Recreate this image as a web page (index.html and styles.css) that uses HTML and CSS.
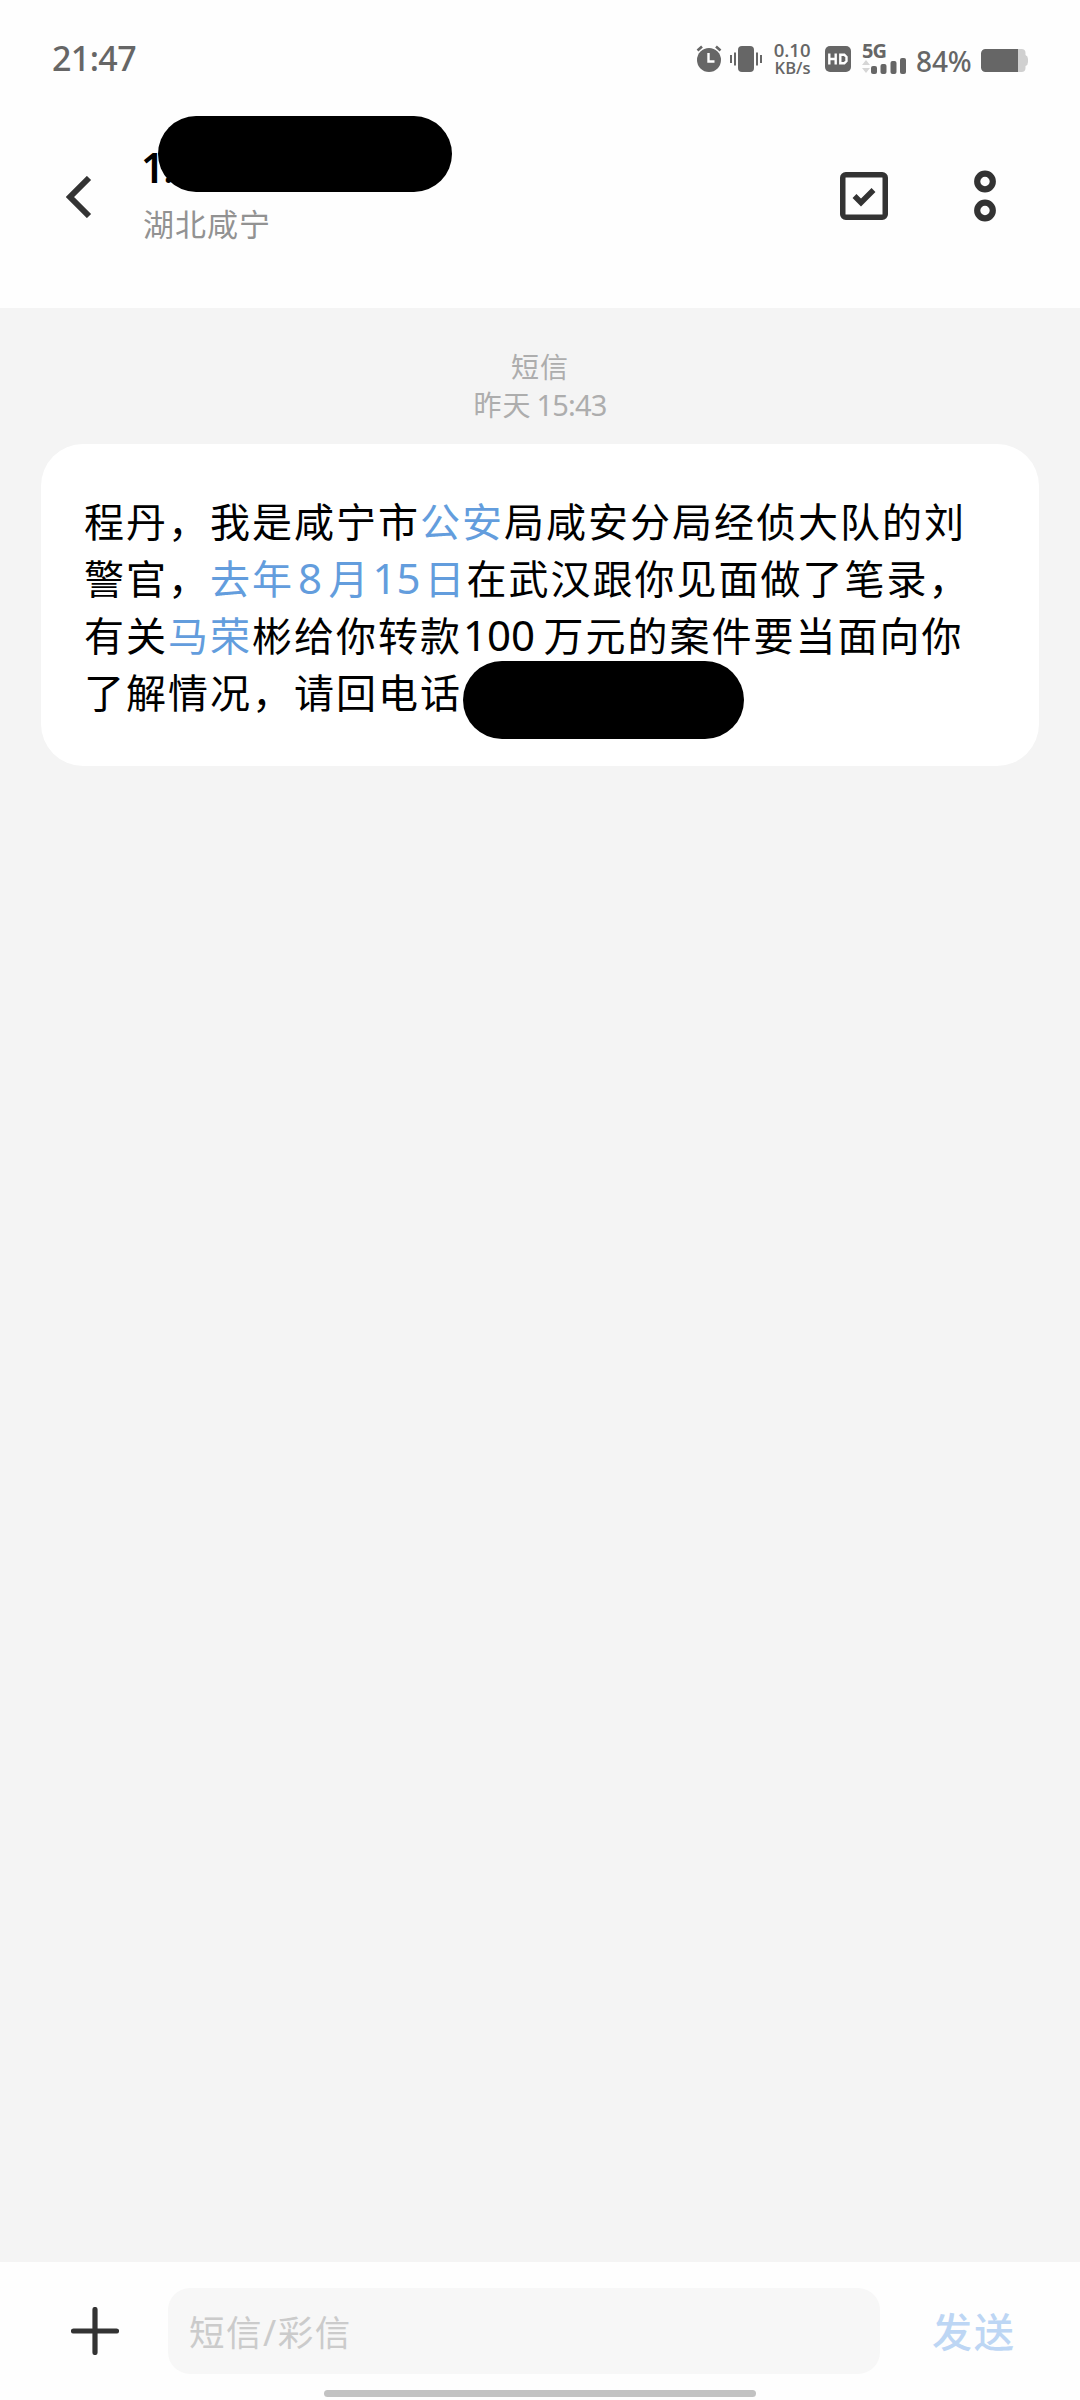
FILE: index.html
```html
<!DOCTYPE html>
<html lang="zh-CN">
<head>
<meta charset="utf-8">
<title>短信</title>
<link rel="stylesheet" href="styles.css">
</head>
<body>
<div class="screen">
  <div class="status">
    <span class="clock">21:47</span>
    <div class="tray">
      <svg class="alarm" width="26" height="28" viewBox="0 0 26 28"><circle cx="13" cy="16" r="12" fill="#666"/><path d="M1.5 6.5L6 2.5M20 2.5l4.5 4" stroke="#666" stroke-width="2.6"/><path d="M12.5 9v8.5h6" fill="none" stroke="#fff" stroke-width="2.4"/></svg>
      <svg class="vibrate" width="32" height="26" viewBox="0 0 32 26"><rect x="8" width="16" height="26" rx="4" fill="#666"/><path d="M1 9v8M5 6.500v13M27 6.500v13M31 9v8" stroke="#666" stroke-width="2"/></svg>
      <div class="speed"><span>0.10</span><span class="unit">KB/s</span></div>
      <svg class="hd" width="26" height="26" viewBox="0 0 26 26"><rect width="26" height="26" rx="5" fill="#666"/><path d="M4.300 7.500v11M10.700 7.500v11M4 13h7M15.300 8.700h4l2.200 2.200v4.200l-2.200 2.200h-4z" fill="none" stroke="#fff" stroke-width="2.400"/></svg>
      <div class="signal">
        <span class="gen">5G</span>
        <svg class="bars" width="45" height="16" viewBox="0 0 45 16"><path d="M0 7l4-5 4 5zM0 10h8l-4 5z" fill="#d6d6d6"/><g fill="#666"><rect x="9" y="8" width="6" height="8" rx="2"/><rect x="18.500" y="6" width="6" height="10" rx="2"/><rect x="28.500" y="3" width="6" height="13" rx="2"/><rect x="38" y="0" width="6" height="16" rx="2"/></g></svg>
      </div>
      <span class="percent">84%</span>
      <svg class="battery" width="47" height="23" viewBox="0 0 47 23"><path d="M37 0h3.500a4 4 0 0 1 4 4v2q2.500 1 2.500 4v3q0 3-2.500 4v2a4 4 0 0 1-4 4H37z" fill="#d0d0d0"/><path d="M4.500 0H37v23H4.500A4.500 4.500 0 0 1 0 18.500v-14A4.500 4.500 0 0 1 4.500 0z" fill="#666"/></svg>
    </div>
  </div>

  <header class="header">
    <svg class="back" width="26" height="42" viewBox="0 0 26 42"><path d="M23 2L4 21l19 19" fill="none" stroke="#333" stroke-width="6"/></svg>
    <div class="contact">
      <div class="number">1<span class="rest">.</span><span class="mask mask-number"></span></div>
      <div class="place">湖北咸宁</div>
    </div>
    <svg class="select" width="48" height="48" viewBox="0 0 48 48"><rect x="2.750" y="2.750" width="42.500" height="42.500" rx="3" fill="none" stroke="#333" stroke-width="5.500"/><path d="M14.500 24l6.500 6.500L33.500 18" fill="none" stroke="#333" stroke-width="5.500"/></svg>
    <svg class="more" width="22" height="52" viewBox="0 0 22 52"><g fill="none" stroke="#333" stroke-width="6.200"><circle cx="11" cy="11.500" r="7.800"/><circle cx="11" cy="40.500" r="7.800"/></g></svg>
  </header>

  <main class="thread">
    <div class="stamp">
      <div>短信</div>
      <div>昨天<span class="time">15:43</span></div>
    </div>
    <div class="bubble">
      <div>程丹，我是咸宁市<span class="link">公安</span>局咸安分局经侦大队的刘</div>
      <div>警官，<span class="link">去年<span class="num n1">8</span>月<span class="num n2">15</span>日</span>在武汉跟你见面做了笔录，</div>
      <div>有关<span class="link">马荣</span>彬给你转款<span class="num n3">100</span>万元的案件要当面向你</div>
      <div>了解情况，请回电话</div>
      <span class="mask mask-phone"></span>
    </div>
  </main>

  <footer class="composer">
    <div class="row">
      <svg class="plus" width="48" height="48" viewBox="0 0 48 48"><path d="M24 2.500v43M2.500 24h43" stroke="#333" stroke-width="5.200" stroke-linecap="round"/></svg>
      <div class="input">短信/彩信</div>
      <span class="send">发送</span>
    </div>
    <div class="home"></div>
  </footer>
</div>
</body>
</html>
```
FILE: styles.css
```css
* { box-sizing: border-box; }
body {
  margin: 0;
  font-family: "Noto Sans", "Noto Sans CJK SC", sans-serif;
  background: #fefefe;
}
svg { display: block; flex: none; }
.screen {
  width: 1080px;
  height: 2400px;
  display: flex;
  flex-direction: column;
  overflow: hidden;
}

/* status bar */
.status {
  height: 108px;
  padding: 0 52px;
  display: flex;
  justify-content: space-between;
  color: #666;
}
.clock {
  padding-top: 34px;
  font-size: 34px;
  font-weight: 500;
  line-height: 48px;
  letter-spacing: -0.6px;
}
.tray { display: flex; align-items: flex-start; }
.alarm { margin-top: 44px; }
.vibrate { margin: 46px 0 0 8px; }
.speed {
  width: 40px;
  margin: 41px 0 0 8.500px;
  display: flex;
  flex-direction: column;
  align-items: flex-end;
  font-family: "Open Sans", sans-serif;
  font-size: 18.500px;
  font-weight: 600;
  line-height: 18px;
  white-space: nowrap;
}
.unit { font-size: 16.500px; }
.hd { margin: 46px 0 0 14.500px; }
.signal { width: 45px; margin: 42px 0 0 11px; }
.gen {
  display: block;
  height: 16px;
  font-size: 20px;
  font-weight: 700;
  line-height: 18px;
  letter-spacing: -1px;
}
.percent {
  width: 57px;
  margin: 43px 0 0 9px;
  font-size: 28px;
  font-weight: 500;
  line-height: 36px;
  letter-spacing: -0.1px;
}
.battery { margin: 49px 0 0 8px; }

/* conversation header */
.header {
  height: 200px;
  padding-left: 66px;
  display: flex;
  align-items: flex-start;
}
.back { margin-top: 68px; }
.contact { width: 300px; margin: 32px 0 0 51px; }
.number {
  position: relative;
  height: 60px;
  font-size: 41px;
  font-weight: 600;
  line-height: 55px;
  text-indent: -2px;
  color: #000;
  white-space: nowrap;
}
.rest { margin-left: -1px; font-size: 36px; }
.mask { position: absolute; background: #000; border-radius: 39px; }
.mask-number { left: 15px; top: -24px; width: 293.500px; height: 76px; }
.place {
  margin-top: -1px;
  font-size: 31px;
  line-height: 50px;
  letter-spacing: 1px;
  color: #929292;
}
.select { margin: 64px 0 0 396.500px; }
.more { margin: 62px 0 0 86px; }

/* messages */
.thread {
  flex: 1;
  padding: 40px 41px 0;
  background: #f4f4f4;
}
.stamp {
  height: 96px;
  text-align: center;
  font-size: 28px;
  line-height: 38px;
  letter-spacing: 1px;
  color: #adadad;
}
.time { margin-left: 5px; font-size: 29px; letter-spacing: -0.800px; }
.bubble {
  position: relative;
  height: 322px;
  padding: 49px 0 0 43px;
  border-radius: 42px;
  background: #fff;
  color: #000;
  font-size: 40px;
  line-height: 57px;
  letter-spacing: 2px;
  white-space: nowrap;
}
.bubble > div { height: 57px; }
.link { color: #639ddd; }
.num {
  display: inline-block;
  font-size: 42px;
  line-height: 50px;
  letter-spacing: 0;
  text-align: left;
}
.n1 { width: 34.500px; padding-left: 4px; }
.n2 { width: 54px; padding-left: 2px; }
.n3 { width: 81.500px; padding-left: 1px; }
.mask-phone { left: 421.500px; top: 217px; width: 281.500px; height: 78px; }

/* composer */
.composer { height: 138px; }
.row {
  height: 128px;
  padding: 26px 0 0 70.500px;
  display: flex;
  align-items: flex-start;
}
.plus { margin-top: 19px; }
.input {
  width: 712px;
  height: 86px;
  margin-left: 49.500px;
  padding-left: 21px;
  border-radius: 22px;
  background: #f7f7f7;
  color: #cbcbcb;
  font-size: 35.500px;
  line-height: 88px;
  letter-spacing: 1.500px;
}
.send {
  margin-left: 52px;
  font-size: 40px;
  font-weight: 500;
  line-height: 87px;
  letter-spacing: 2px;
  color: #bdd6f4;
}
.home {
  width: 432px;
  height: 7px;
  margin: 0 auto;
  border-radius: 4px;
  background: #c2c2c2;
}
```
